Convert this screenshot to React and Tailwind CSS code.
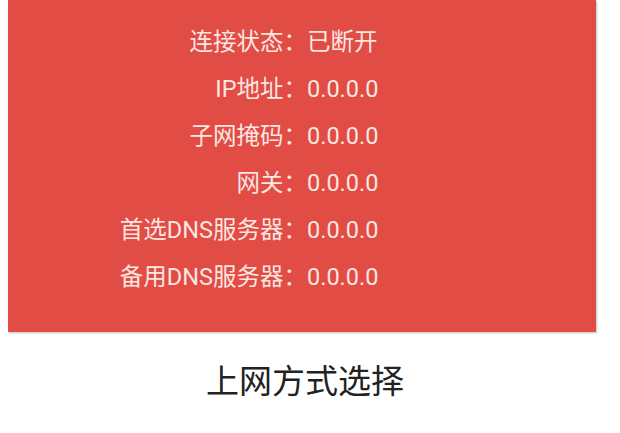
import React from "react";

const rows = [
  ["连接状态：", "已断开"],
  ["IP地址：", "0.0.0.0"],
  ["子网掩码：", "0.0.0.0"],
  ["网关：", "0.0.0.0"],
  ["首选DNS服务器：", "0.0.0.0"],
  ["备用DNS服务器：", "0.0.0.0"],
];

export default function App() {
  return (
    <div
      className="w-[620px] h-[433px] bg-white overflow-hidden"
      style={{ fontFamily: 'Roboto, "Noto Sans CJK SC", sans-serif' }}
    >
      <div className="ml-[8px] w-[588px] h-[332px] bg-[#e14c45] shadow-[1px_1px_2px_rgba(0,0,0,0.25)] pt-[19px]">
        <div className="grid grid-cols-[299px_1fr] text-[23.5px] leading-[47px] text-[#fce6e2]">
          {rows.map(([k, v]) => (
            <React.Fragment key={k}>
              <div className="text-right">{k}</div>
              <div>{v}</div>
            </React.Fragment>
          ))}
        </div>
      </div>
      <div className="w-[610px] mt-[30px] text-center text-[33px] leading-[40px] text-[#222222]">
        上网方式选择
      </div>
    </div>
  );
}
